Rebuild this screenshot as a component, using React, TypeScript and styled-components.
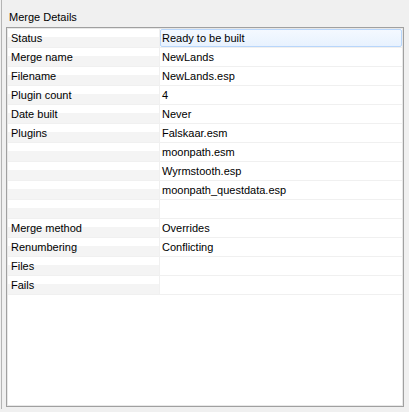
import React from "react";
import styled, { createGlobalStyle } from "styled-components";

const Global = createGlobalStyle`
  html, body { margin: 0; padding: 0; background: #f0f0f0; }
  body { font-family: "Liberation Sans", Arial, sans-serif; font-size: 11px; color: #000; }
  * { box-sizing: border-box; }
`;

const Page = styled.div`
  width: 409px;
  height: 412px;
  display: flex;
  flex-direction: column;
  background: #f0f0f0;
  overflow: hidden;
`;

const Main = styled.div`
  flex: 0 0 409px;
  margin-left: 1px;
  border-left: 1px solid #b4b4b4;
  padding-left: 4px;
  display: flex;
  flex-direction: column;
`;

const Title = styled.div`
  height: 27px;
  padding: 10px 0 0 3px;
  line-height: 14px;
`;

const Box = styled.div`
  width: 398px;
  height: 380px;
  border: 1px solid #a0a0a0;
  box-shadow: inset 0 0 0 1px #e8e8e8;
  background: #fff;
  padding: 1px 2px 0 1px;
`;

const Inner = styled.div`
  background: #fff;
  width: 394px;
`;

const Row = styled.div`
  display: grid;
  grid-template-columns: 151px 1px 1fr;
  height: 19px;
  border-bottom: 1px solid #f0f0f0;
`;

const NameCell = styled.div`
  background: linear-gradient(to bottom, #ffffff 0, #ffffff 8px, #f4f4f4 8px, #f4f4f4 100%);
  padding-left: 3px;
  line-height: 18px;
  white-space: nowrap;
`;

const Divider = styled.div`
  background: #f0f0f0;
`;

const ValueCell = styled.div<{ $selected?: boolean }>`
  line-height: ${(p) => (p.$selected ? "16px" : "18px")};
  padding-left: ${(p) => (p.$selected ? "1px" : "2px")};
  white-space: nowrap;
  ${(p) =>
    p.$selected &&
    `
    border: 1px solid #b8d6fb;
    border-radius: 2px;
    background: linear-gradient(to bottom, #f4f9ff, #e8f2fe);
  `}
`;

const Bottom = styled.div`
  flex: 1;
  position: relative;
  border-top: 1px solid transparent;
`;

const BottomLine = styled.div`
  margin-top: 2px;
  height: 1px;
  background: #a9a9a9;
`;

const Tabs = styled.div`
  display: grid;
  grid-template-columns: 20px 38px 38px 38px 136px 1fr;
  height: 2px;
`;

const Tab = styled.div`
  border-right: 1px solid #ffffff;
  background: #f0f0f0;
`;

const rows: Array<[string, string]> = [
  ["Status", "Ready to be built"],
  ["Merge name", "NewLands"],
  ["Filename", "NewLands.esp"],
  ["Plugin count", "4"],
  ["Date built", "Never"],
  ["Plugins", "Falskaar.esm"],
  ["", "moonpath.esm"],
  ["", "Wyrmstooth.esp"],
  ["", "moonpath_questdata.esp"],
  ["", ""],
  ["Merge method", "Overrides"],
  ["Renumbering", "Conflicting"],
  ["Files", ""],
  ["Fails", ""],
];

export default function App() {
  return (
    <Page>
      <Global />
      <Main>
        <Title>Merge Details</Title>
        <Box>
          <Inner>
            {rows.map(([name, value], i) => (
              <Row key={i}>
                <NameCell>{name}</NameCell>
                <Divider />
                <ValueCell $selected={i === 0}>{value}</ValueCell>
              </Row>
            ))}
          </Inner>
        </Box>
      </Main>
      <Bottom>
        <BottomLine />
        <Tabs>
          <Tab />
          <Tab />
          <Tab />
          <Tab />
          <Tab />
          <Tab />
        </Tabs>
      </Bottom>
    </Page>
  );
}
